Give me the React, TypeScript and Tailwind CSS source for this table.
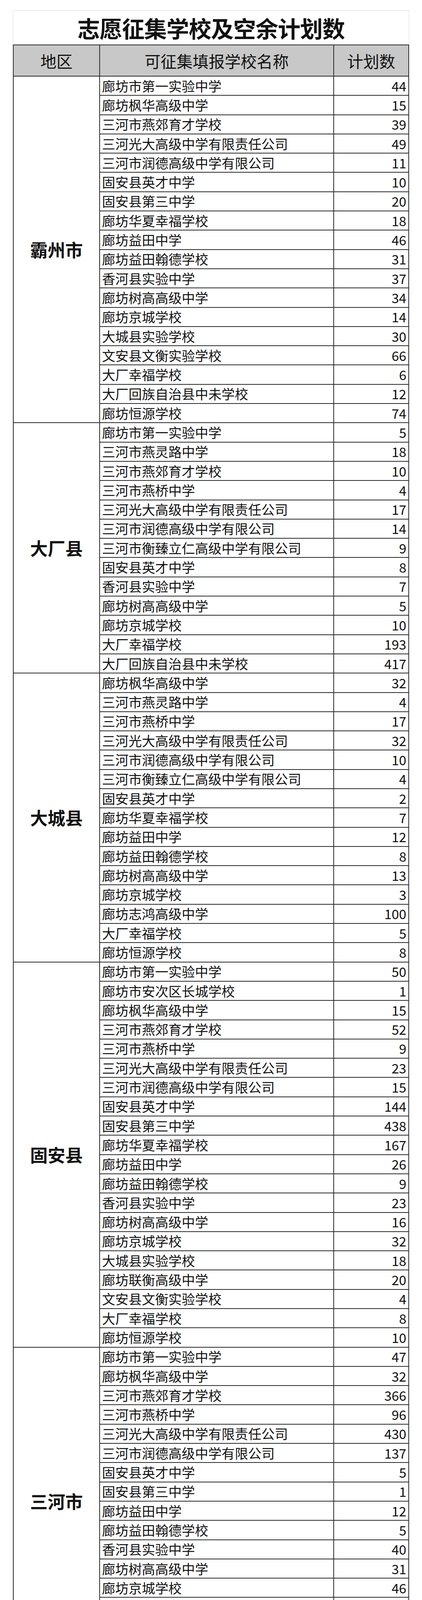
const F = "三河市衡臻立仁高级中学有限公司";
const GD = "三河光大高级中学有限责任公司";
const RD = "三河市润德高级中学有限公司";
const ZW = "大厂回族自治县中未学校";

const regions: [string, [string, number][]][] = [
  ["霸州市", [
    ["廊坊市第一实验中学", 44], ["廊坊枫华高级中学", 15], ["三河市燕郊育才学校", 39], [GD, 49], [RD, 11],
    ["固安县英才中学", 10], ["固安县第三中学", 20], ["廊坊华夏幸福学校", 18], ["廊坊益田中学", 46],
    ["廊坊益田翰德学校", 31], ["香河县实验中学", 37], ["廊坊树高高级中学", 34], ["廊坊京城学校", 14],
    ["大城县实验学校", 30], ["文安县文衡实验学校", 66], ["大厂幸福学校", 6], [ZW, 12], ["廊坊恒源学校", 74],
  ]],
  ["大厂县", [
    ["廊坊市第一实验中学", 5], ["三河市燕灵路中学", 18], ["三河市燕郊育才学校", 10], ["三河市燕桥中学", 4],
    [GD, 17], [RD, 14], [F, 9], ["固安县英才中学", 8], ["香河县实验中学", 7], ["廊坊树高高级中学", 5],
    ["廊坊京城学校", 10], ["大厂幸福学校", 193], [ZW, 417],
  ]],
  ["大城县", [
    ["廊坊枫华高级中学", 32], ["三河市燕灵路中学", 4], ["三河市燕桥中学", 17], [GD, 32], [RD, 10], [F, 4],
    ["固安县英才中学", 2], ["廊坊华夏幸福学校", 7], ["廊坊益田中学", 12], ["廊坊益田翰德学校", 8],
    ["廊坊树高高级中学", 13], ["廊坊京城学校", 3], ["廊坊志鸿高级中学", 100], ["大厂幸福学校", 5], ["廊坊恒源学校", 8],
  ]],
  ["固安县", [
    ["廊坊市第一实验中学", 50], ["廊坊市安次区长城学校", 1], ["廊坊枫华高级中学", 15], ["三河市燕郊育才学校", 52],
    ["三河市燕桥中学", 9], [GD, 23], [RD, 15], ["固安县英才中学", 144], ["固安县第三中学", 438],
    ["廊坊华夏幸福学校", 167], ["廊坊益田中学", 26], ["廊坊益田翰德学校", 9], ["香河县实验中学", 23],
    ["廊坊树高高级中学", 16], ["廊坊京城学校", 32], ["大城县实验学校", 18], ["廊坊联衡高级中学", 20],
    ["文安县文衡实验学校", 4], ["大厂幸福学校", 8], ["廊坊恒源学校", 10],
  ]],
  ["三河市", [
    ["廊坊市第一实验中学", 47], ["廊坊枫华高级中学", 32], ["三河市燕郊育才学校", 366], ["三河市燕桥中学", 96],
    [GD, 430], [RD, 137], ["固安县英才中学", 5], ["固安县第三中学", 1], ["廊坊益田中学", 12],
    ["廊坊益田翰德学校", 5], ["香河县实验中学", 40], ["廊坊树高高级中学", 31], ["廊坊京城学校", 46],
    ["廊坊贺阳高级中学有限公司", 13], ["大厂幸福学校", 43], [ZW, 7],
  ]],
  ["文安县", [
    ["廊坊枫华高级中学", 11], ["三河市燕灵路中学", 4], ["三河市燕郊育才学校", 8], [GD, 24], [RD, 11], [F, 1],
    ["廊坊华夏幸福学校", 4], ["廊坊益田中学", 25], ["廊坊益田翰德学校", 16], ["廊坊树高高级中学", 11],
    ["廊坊京城学校", 2], ["廊坊贺阳高级中学有限公司", 214], ["大厂幸福学校", 8], [ZW, 6],
  ]],
  ["香河县", [
    ["廊坊市第一实验中学", 19], ["三河市燕郊育才学校", 62], ["三河市燕桥中学", 5], [GD, 19], [RD, 8], [F, 11],
    ["固安县英才中学", 8], ["固安县第三中学", 2], ["廊坊华夏幸福学校", 9], ["廊坊益田中学", 14],
    ["香河县实验中学", 371], ["廊坊树高高级中学", 330], ["廊坊京城学校", 497], ["廊坊志鸿高级中学", 17],
    ["廊坊贺阳高级中学有限公司", 12], ["文安县文衡实验学校", 4], ["大厂幸福学校", 15], [ZW, 30], ["廊坊恒源学校", 8],
  ]],
  ["永清县", [
    ["廊坊市第一实验中学", 59], ["三河市燕灵路中学", 9], ["三河市燕郊育才学校", 37], ["三河市燕桥中学", 9],
    [RD, 41], [F, 15], ["固安县英才中学", 26], ["固安县第三中学", 17], ["廊坊华夏幸福学校", 19],
    ["永清县第一中学", 12], ["廊坊益田中学", 204], ["廊坊益田翰德学校", 510], ["香河县实验中学", 23],
    ["廊坊树高高级中学", 16], ["廊坊京城学校", 29], ["文安县文衡实验学校", 28],
  ]],
  ["主城区", [
    ["廊坊市第一实验中学", 55], ["三河市燕灵路中学", 9], ["三河市燕郊育才学校", 166], ["三河市燕桥中学", 13],
    [GD, 79], [RD, 28], [F, 12], ["固安县英才中学", 6], ["固安县第三中学", 25], ["廊坊华夏幸福学校", 11],
    ["廊坊益田中学", 32], ["廊坊益田翰德学校", 14], ["香河县实验中学", 22], ["廊坊树高高级中学", 23],
    ["廊坊京城学校", 31], ["廊坊志鸿高级中学", 59], ["廊坊联衡高级中学", 17], ["文安县文衡实验学校", 20],
    ["大厂幸福学校", 19], [ZW, 47], ["廊坊恒源学校", 26],
  ]],
];

// scroll thumbs left over from the stitched screenshot
const thumbs: [number, number][] = [
  [4351, 4471], [5025, 5301], [5819, 6132], [6650, 6964], [7398, 7713],
];

export default function App() {
  return (
    <div className="relative w-[1080px] h-[7769px] overflow-hidden bg-white text-[#111] font-['Noto_Sans_CJK_SC',sans-serif]">
      <div className="pt-[26px]">
        <div className="ml-[33px] w-[1014px] h-[88px] border-t border-x border-[#dadada] flex items-center justify-center">
          <h1 className="text-[58px] font-bold leading-none tracking-[-1px]">志愿征集学校及空余计划数</h1>
        </div>

        <div className="ml-[33px] w-[1014px] border-x-2 border-[#2a2a2a]">
          {/* header */}
          <div className="flex h-[82px] border-y-2 border-[#2a2a2a] bg-[#c8c8c8] text-[41px] leading-none">
            <div className="w-[221px] shrink-0 border-r-2 border-[#2a2a2a] flex items-center justify-center">地区</div>
            <div className="w-[599px] shrink-0 border-r-2 border-[#2a2a2a] flex items-center justify-center">可征集填报学校名称</div>
            <div className="flex-1 flex items-center justify-center">计划数</div>
          </div>

          {regions.map(([name, rows]) => (
            <div key={name} className="flex">
              <div className="w-[221px] shrink-0 border-r-2 border-b-2 border-[#2a2a2a] flex items-center justify-center text-[45px] font-bold leading-none">
                {name}
              </div>
              <div className="flex-1 flex flex-col">
                {rows.map(([school, n], i) => (
                  <div key={i} className="flex h-[49.31px] border-b-2 border-[#2a2a2a] text-[34px] leading-none">
                    <div className="w-[599px] shrink-0 border-r-2 border-[#2a2a2a] pl-[5px] flex items-center whitespace-nowrap">{school}</div>
                    <div className="flex-1 pr-[5px] flex items-center justify-end">{n}</div>
                  </div>
                ))}
              </div>
            </div>
          ))}
        </div>

        <div className="mt-[34px] h-[43px] bg-[#cbcbcb]" />
      </div>

      {thumbs.map(([a, b]) => (
        <div key={a} className="absolute left-[1057px] w-[9px] rounded-full bg-[#c4c4c4]" style={{ top: a, height: b - a }} />
      ))}
    </div>
  );
}
